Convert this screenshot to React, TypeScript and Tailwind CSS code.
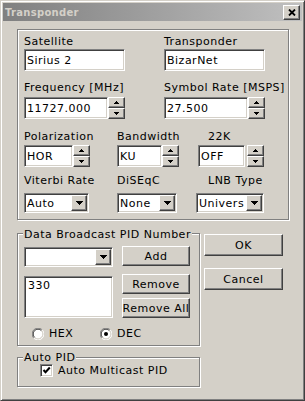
import React from 'react';

const sunken =
  'border border-t-[#808080] border-l-[#808080] border-b-white border-r-white shadow-[inset_1px_1px_0_#404040,inset_-1px_-1px_0_#d4d0c8]';
const raised =
  'border border-t-white border-l-white border-b-[#404040] border-r-[#404040] shadow-[inset_-1px_-1px_0_#808080] bg-[#d4d0c8]';
const etched = 'border border-[#808080] shadow-[inset_1px_1px_0_#fff,1px_1px_0_#fff]';

const UpArrow = () => (
  <svg width="7" height="3" viewBox="0 0 7 3" shapeRendering="crispEdges">
    <path d="M3 0h1v1h1v1h1v1H1V2h1V1h1z" fill="#000" />
  </svg>
);

const DownArrow = () => (
  <svg width="7" height="3" viewBox="0 0 7 3" shapeRendering="crispEdges">
    <path d="M1 0h5v1H5v1H4v1H3V2H2V1H1z" fill="#000" />
  </svg>
);

const ComboArrow = () => (
  <svg width="7" height="4" viewBox="0 0 7 4" shapeRendering="crispEdges">
    <path d="M0 0h7v1H6v1H5v1H4v1H3V3H2V2H1V1H0z" fill="#000" />
  </svg>
);

const Edit = ({ value, className }: { value: string; className: string }) => (
  <div className={`${sunken} bg-white flex items-center pl-[2px] whitespace-nowrap overflow-hidden ${className}`}>
    {value}
  </div>
);

const Spin = ({ className }: { className: string }) => (
  <div className={`flex flex-col ${className}`}>
    <div className={`${raised} flex-1 flex items-center justify-center`}>
      <UpArrow />
    </div>
    <div className={`${raised} flex-1 flex items-center justify-center`}>
      <DownArrow />
    </div>
  </div>
);

const Combo = ({ value, className }: { value: string; className: string }) => (
  <div className={`${sunken} bg-white flex ${className}`}>
    <div className="flex-1 flex items-center pl-[2px] overflow-hidden whitespace-nowrap">{value}</div>
    <div className={`${raised} w-[16px] shrink-0 m-[1px] flex items-center justify-center`}>
      <ComboArrow />
    </div>
  </div>
);

const Button = ({ label, className }: { label: string; className: string }) => (
  <div className={`${raised} flex items-center justify-center whitespace-nowrap ${className}`}>{label}</div>
);

const Radio = ({ checked }: { checked?: boolean }) => (
  <svg width="12" height="12" viewBox="0 0 12 12">
    <circle cx="6" cy="6" r="5" fill="#fff" />
    <path d="M1.8 10.2A5.9 5.9 0 0 1 10.2 1.8" stroke="#808080" fill="none" />
    <path d="M2.6 9.4A4.8 4.8 0 0 1 9.4 2.6" stroke="#404040" fill="none" />
    <path d="M10.2 1.8A5.9 5.9 0 0 1 1.8 10.2" stroke="#fff" fill="none" />
    <path d="M9.4 2.6A4.8 4.8 0 0 1 2.6 9.4" stroke="#d4d0c8" fill="none" />
    {checked && <circle cx="6" cy="6" r="2" fill="#000" />}
  </svg>
);

const Check = () => (
  <div className={`${sunken} bg-white w-[13px] h-[13px] flex items-center justify-center`}>
    <svg width="9" height="9" viewBox="0 0 9 9">
      <path d="M1.5 4l2 2.2L7.8 1.5" stroke="#000" strokeWidth="2" fill="none" />
    </svg>
  </div>
);

export default function App() {
  return (
    <div className="w-[305px] h-[401px] bg-[#d4d0c8] border border-t-[#d4d0c8] border-l-[#d4d0c8] border-b-[#404040] border-r-[#404040] shadow-[inset_1px_1px_0_#fff,inset_-1px_-1px_0_#808080] p-[2px] flex flex-col font-['DejaVu_Sans',sans-serif] text-[11px] leading-[13px] tracking-[0.5px] text-black">
      {/* title bar */}
      <div className="h-[18px] flex items-center justify-between bg-linear-to-r from-[#808080] to-[#c0c0c0] pl-[2px] pr-[2px]">
        <span className="text-[10px] font-bold tracking-[0.3px] text-[#d4d0c8]">Transponder</span>
        <div className={`${raised} w-[17px] h-[15px] flex items-center justify-center`}>
          <svg width="8" height="7" viewBox="0 0 8 7">
            <path d="M1 0.5l6 6M7 0.5l-6 6" stroke="#000" strokeWidth="1.8" />
          </svg>
        </div>
      </div>

      {/* tuning group */}
      <div className={`ml-[14px] mt-[8px] w-[272px] h-[191px] ${etched} pl-[6px] flex flex-col`}>
        <div className="mt-[5px] flex gap-[39px]">
          <div className="w-[101px]">
            <div>Satellite</div>
            <Edit value="Sirius 2" className="mt-[1px] w-[101px] h-[22px]" />
          </div>
          <div className="w-[101px]">
            <div>Transponder</div>
            <Edit value="BizarNet" className="mt-[1px] w-[101px] h-[22px]" />
          </div>
        </div>

        <div className="mt-[10px] flex gap-[39px]">
          <div className="w-[101px]">
            <div className="whitespace-nowrap">Frequency [MHz]</div>
            <div className="mt-[3px] flex">
              <Edit value="11727.000" className="w-[84px] h-[22px]" />
              <Spin className="w-[17px] h-[22px]" />
            </div>
          </div>
          <div className="w-[101px]">
            <div className="whitespace-nowrap">Symbol Rate [MSPS]</div>
            <div className="mt-[3px] flex">
              <Edit value="27.500" className="w-[84px] h-[22px]" />
              <Spin className="w-[17px] h-[22px]" />
            </div>
          </div>
        </div>

        <div className="mt-[11px] flex">
          <div className="w-[93px]">
            <div>Polarization</div>
            <div className="mt-[2px] flex">
              <Edit value="HOR" className="w-[49px] h-[22px]" />
              <Spin className="w-[17px] h-[22px]" />
            </div>
          </div>
          <div className="w-[81px]">
            <div>Bandwidth</div>
            <div className="mt-[2px] flex">
              <Edit value="KU" className="w-[45px] h-[22px]" />
              <Spin className="w-[17px] h-[22px]" />
            </div>
          </div>
          <div>
            <div className="pl-[10px]">22K</div>
            <div className="mt-[2px] flex gap-[2px]">
              <Edit value="OFF" className="w-[47px] h-[22px]" />
              <Spin className="w-[17px] h-[22px]" />
            </div>
          </div>
        </div>

        <div className="mt-[7px] flex">
          <div className="w-[93px]">
            <div>Viterbi Rate</div>
            <Combo value="Auto" className="mt-[6px] w-[65px] h-[20px]" />
          </div>
          <div className="w-[79px]">
            <div>DiSEqC</div>
            <Combo value="None" className="mt-[6px] w-[60px] h-[20px]" />
          </div>
          <div>
            <div className="pl-[12px]">LNB Type</div>
            <Combo value="Univers" className="mt-[6px] w-[68px] h-[20px]" />
          </div>
        </div>
      </div>

      {/* lower part */}
      <div className="ml-[14px] mt-[13px] flex">
        <div className="w-[183px] flex flex-col">
          <div className={`relative h-[113px] ${etched} pl-[6px] flex flex-col`}>
            <div className="absolute left-[5px] top-[-6px] px-[1px] bg-[#d4d0c8] whitespace-nowrap">
              Data Broadcast PID Number
            </div>
            <div className="mt-[12px] flex items-start gap-[9px]">
              <Combo value="" className="mt-[1px] w-[89px] h-[20px]" />
              <Button label="Add" className="w-[68px] h-[20px]" />
            </div>
            <div className="mt-[7px] flex items-start gap-[9px]">
              <div className={`${sunken} bg-white mt-[2px] w-[89px] h-[42px] pl-[3px] pt-[2px]`}>330</div>
              <div className="flex flex-col gap-[4px]">
                <Button label="Remove" className="w-[68px] h-[20px]" />
                <Button label="Remove All" className="w-[68px] h-[20px]" />
              </div>
            </div>
            <div className="mt-[9px] ml-[8px] flex items-center">
              <div className="w-[68px] flex items-center gap-[5px]">
                <Radio />
                <span>HEX</span>
              </div>
              <div className="flex items-center gap-[5px]">
                <Radio checked />
                <span>DEC</span>
              </div>
            </div>
          </div>

          <div className={`relative mt-[11px] h-[30px] ${etched}`}>
            <div className="absolute left-[5px] top-[-7px] px-[1px] bg-[#d4d0c8]">Auto PID</div>
            <div className="mt-[6px] ml-[22px] flex items-center gap-[5px]">
              <Check />
              <span>Auto Multicast PID</span>
            </div>
          </div>
        </div>

        <div className="ml-[4px] flex flex-col">
          <Button label="OK" className="mt-[1px] w-[79px] h-[22px]" />
          <Button label="Cancel" className="mt-[12px] w-[79px] h-[22px]" />
        </div>
      </div>
    </div>
  );
}
